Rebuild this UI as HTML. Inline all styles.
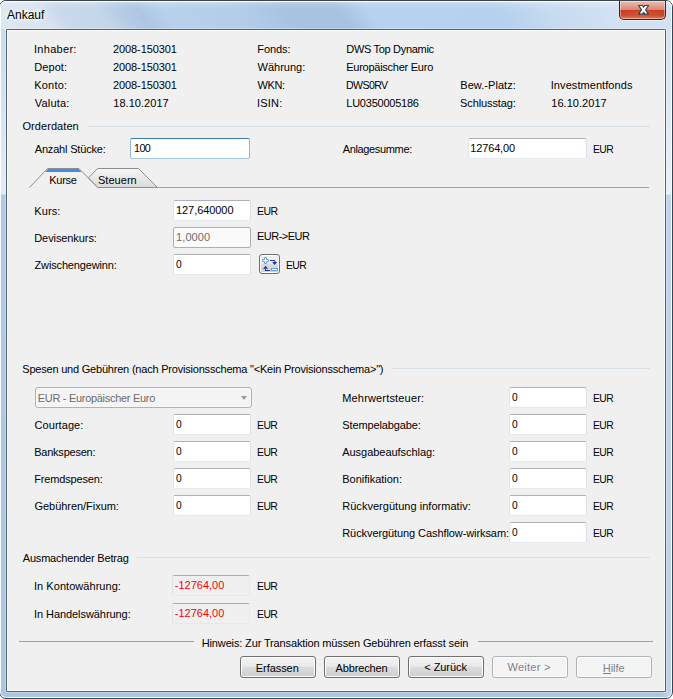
<!DOCTYPE html>
<html><head><meta charset="utf-8"><title>Ankauf</title>
<style>*{box-sizing:border-box;margin:0;padding:0}
html,body{width:673px;height:699px;overflow:hidden;background:#fff}
body{font-family:"Liberation Sans",sans-serif;font-size:11px;color:#000;position:relative}
.abs{position:absolute}
#frame{position:absolute;left:-1px;top:0;width:674px;height:699px;border:1px solid #3a444f;border-radius:7px;overflow:hidden;
 background:linear-gradient(90deg,rgba(255,255,255,0) 660px,rgba(255,255,255,.22) 668px),linear-gradient(180deg,#cbdcf0 0px,#c9dbef 30px,#d5e3f3 110px,#e3ecf7 193px,#aecae8 194px,#a9c6e3 699px)}
#frame:after{content:"";position:absolute;left:0;top:0;right:0;bottom:0;border-radius:6px;box-shadow:inset 0 0 0 1px rgba(255,255,255,.93)}
#tb{position:absolute;left:0;top:0;width:672px;height:28px;overflow:hidden}
#stripes{position:absolute;left:-40px;top:0;width:760px;height:28px;transform-origin:0 0;transform:skewX(36deg);
 background:linear-gradient(90deg,#dde7f2 30px,#d7e3f0 72px,#c9d9eb 92px,#c4d6e9 130px,#b7cde6 150px,#adc6e2 172px,#b8d1eb 196px,#b3cde9 270px,#a7c3e0 320px,#a7c3e0 372px,#b6d2ee 402px,#b5d1ed 530px,#c6daf0 580px,#d2e1f3 640px)}
#tbv{position:absolute;left:0;top:0;width:672px;height:28px;background:linear-gradient(180deg,rgba(255,255,255,.3) 1px,rgba(255,255,255,.1) 4px,rgba(255,255,255,0) 9px)}
#close{position:absolute;left:619px;top:1px;width:47px;height:19px;border:1px solid #4e1d17;border-top:none;border-radius:0 0 5px 5px;
 background:radial-gradient(ellipse 60% 45% at 50% 78%,rgba(240,110,70,.45),rgba(240,110,70,0) 100%),linear-gradient(180deg,#efbfb4 0%,#e3a195 25%,#d88a7b 47%,#c53a20 52%,#c4432a 80%,#db8460 100%);
 box-shadow:inset 0 0 0 1px rgba(255,255,255,.4),0 1px 1px rgba(255,255,255,.5)}
#client{position:absolute;left:6px;top:29px;width:660px;height:663px;border:1px solid #54626f;border-radius:1px;background:#f0f0f0;box-shadow:inset 0 0 0 1px #fbfbfb,0 0 0 1px rgba(255,255,255,.3)}
.t{position:absolute;white-space:nowrap;font-size:11px;line-height:13px;transform-origin:0 0}
.t.ttl{font-size:12px;line-height:14px;text-shadow:0 0 6px #fff,0 0 6px #fff,0 0 10px #fff}
.t.gr{color:#6d6d6d}
.t.dg{color:#838383}
.t.red{color:#f8000a}
.sep{position:absolute;background:#d5dfe5}
.hl{position:absolute;background:#a0a0a0}
.inp{position:absolute;background:#fff;border:1px solid #e3e9ef;border-top-color:#afb1b7;border-left-color:#e2e3ea;border-right-color:#dbdfe6;border-radius:2px}
.inp.focus{border-color:#3d7bad #8fb6d9 #a2c6e2 #8fb6d9}
.inp.dis{background:#fbfbfb;border:1px solid #afafaf;border-radius:2px}
.inp.ro{background:#f0f0f0;border-color:#abadb3 #e4e9f0 #e4e9f0 #dfe1e8}
.combo{position:absolute;border:1px solid #adb2b5;border-radius:3px;background:#f4f4f4;box-shadow:inset 0 0 0 1px #fafafa}
.combo .arr{position:absolute;right:4px;top:8px;width:0;height:0;border-left:3.5px solid transparent;border-right:3.5px solid transparent;border-top:4px solid #9a9a9a}
.ibtn,.btn{position:absolute;border:1px solid #707070;border-radius:3px;background:linear-gradient(180deg,#f2f2f2 0%,#ebebeb 47%,#dddddd 48%,#cfcfcf 100%);box-shadow:inset 0 0 0 1px #fcfcfc}
.btn.disb{border-color:#adb2b5;background:#f4f4f4;box-shadow:inset 0 0 0 1px #fcfcfc}
</style></head>
<body>
<div id="frame"><div id="tb"><div id="stripes"></div><div id="tbv"></div></div></div>
<div id="close"><svg width="45" height="18" viewBox="0 0 45 18" style="position:absolute;left:0;top:0"><path d="M18.6 4.5H22.6L23.6 6.3L24.6 4.5H28.6L25.7 8.8L28.6 13.1H24.6L23.6 11.3L22.6 13.1H18.6L21.5 8.8Z" fill="#fbfbfb" stroke="#39414d" stroke-width="1.2" stroke-linejoin="round"/></svg></div>
<div id="client"></div>
<span class="t " style="left:34.0px;top:43px;letter-spacing:0.292px;">Inhaber:</span>
<span class="t " style="left:34.25px;top:61px;letter-spacing:0.071px;">Depot:</span>
<span class="t " style="left:34.25px;top:79px;letter-spacing:0.191px;">Konto:</span>
<span class="t " style="left:34.75px;top:97px;letter-spacing:0.184px;">Valuta:</span>
<span class="t " style="left:113.0px;top:43px;letter-spacing:-0.093px;">2008-150301</span>
<span class="t " style="left:113.0px;top:61px;letter-spacing:-0.093px;">2008-150301</span>
<span class="t " style="left:113.0px;top:79px;letter-spacing:-0.093px;">2008-150301</span>
<span class="t " style="left:113.25px;top:97px;letter-spacing:0.048px;">18.10.2017</span>
<span class="t " style="left:257.25px;top:43px;letter-spacing:-0.056px;">Fonds:</span>
<span class="t " style="left:257.5px;top:61px;letter-spacing:0.01px;">Währung:</span>
<span class="t " style="left:257.5px;top:79px;letter-spacing:-0.409px;">WKN:</span>
<span class="t " style="left:257.0px;top:97px;letter-spacing:0.202px;">ISIN:</span>
<span class="t " style="left:346.25px;top:43px;letter-spacing:-0.307px;">DWS Top Dynamic</span>
<span class="t " style="left:346.25px;top:61px;letter-spacing:-0.256px;">Europäischer Euro</span>
<span class="t " style="left:346.25px;top:79px;letter-spacing:-0.6px;transform:scaleX(0.9603);">DWS0RV</span>
<span class="t " style="left:346.25px;top:97px;letter-spacing:-0.227px;">LU0350005186</span>
<span class="t " style="left:460.25px;top:79px;letter-spacing:0.049px;">Bew.-Platz:</span>
<span class="t " style="left:460.0px;top:97px;letter-spacing:-0.105px;">Schlusstag:</span>
<span class="t " style="left:550.75px;top:79px;letter-spacing:0.068px;">Investmentfonds</span>
<span class="t " style="left:551.25px;top:97px;letter-spacing:0.048px;">16.10.2017</span>
<span class="t " style="left:22.5px;top:120px;letter-spacing:0.064px;">Orderdaten</span>
<div class="sep" style="left:87px;top:126px;width:563px;height:1px;"></div>
<span class="t " style="left:34.75px;top:143px;letter-spacing:-0.179px;">Anzahl Stücke:</span>
<div class="inp focus" style="left:130px;top:138px;width:120px;height:21px;"></div>
<span class="t " style="left:133.5px;top:142px;letter-spacing:-0.6px;transform:scaleX(0.9807);">100</span>
<span class="t " style="left:342.75px;top:143px;letter-spacing:-0.357px;">Anlagesumme:</span>
<div class="inp" style="left:468px;top:138px;width:119px;height:21px;"></div>
<span class="t " style="left:470.25px;top:142px;letter-spacing:-0.143px;">12764,00</span>
<span class="t " style="left:593.0px;top:143px;letter-spacing:-0.6px;transform:scaleX(0.9376);">EUR</span>
<svg class="abs" style="left:20px;top:160px" width="640" height="32" viewBox="20 160 640 32">
<defs><linearGradient id="tg" x1="0" y1="0" x2="0" y2="1"><stop offset="0" stop-color="#f6f6f6"/><stop offset="1" stop-color="#dadada"/></linearGradient></defs>
<path d="M88.5 177.8 L97.5 168.5 L138.5 168.5 L157.5 187.5 L97.5 187.5 Z" fill="url(#tg)" stroke="#8e8e8e" stroke-width="1"/>
<path d="M157.5 187.5 L649 187.5" stroke="#a0a0a0" stroke-width="1" fill="none"/>
<path d="M29.5 187.5 L47.5 168.5 L79 168.5 L97.5 187.5" fill="#f0f0f0" stroke="#8e8e8e" stroke-width="1"/>
<path d="M48 169 L78.6 169 L81.5 172 L45.2 172 Z" fill="#3b8ef0"/>
</svg>
<span class="t " style="left:49.25px;top:174px;letter-spacing:-0.289px;">Kurse</span>
<span class="t " style="left:98.0px;top:174px;letter-spacing:0.026px;">Steuern</span>
<span class="t " style="left:34.25px;top:205px;letter-spacing:0.105px;">Kurs:</span>
<div class="inp" style="left:173px;top:200px;width:78px;height:21px;"></div>
<span class="t " style="left:176.0px;top:204px;letter-spacing:-0.067px;">127,640000</span>
<span class="t " style="left:257.0px;top:205px;letter-spacing:-0.6px;transform:scaleX(0.9571);">EUR</span>
<span class="t " style="left:34.25px;top:232px;letter-spacing:-0.089px;">Devisenkurs:</span>
<div class="inp dis" style="left:173px;top:227px;width:78px;height:21px;"></div>
<span class="t gr" style="left:176.0px;top:231px;letter-spacing:0.103px;">1,0000</span>
<span class="t " style="left:257.0px;top:230px;letter-spacing:-0.505px;">EUR-&gt;EUR</span>
<span class="t " style="left:34.5px;top:259px;letter-spacing:-0.144px;">Zwischengewinn:</span>
<div class="inp" style="left:173px;top:254px;width:78px;height:21px;"></div>
<span class="t " style="left:176.25px;top:258px;transform:scaleX(0.9295);">0</span>
<span class="t " style="left:285.75px;top:259px;letter-spacing:-0.6px;transform:scaleX(0.9425);">EUR</span>
<div class="ibtn" style="left:259px;top:254px;width:21px;height:20px"></div>
<svg class="abs" style="left:259px;top:254px" width="21" height="20" viewBox="259 254 21 20">
<path d="M264.5 257.5h2v2h2v2h-2v2h-2v-2h-2v-2h2z" fill="#fbfdff" stroke="#5c9bd9" stroke-width="0.9"/>
<path d="M270 260.5h4.3l1 1.4" fill="none" stroke="#1a3a9e" stroke-width="1.1"/>
<path d="M272.1 261.9h5.1l-2.55 3.1z" fill="#1a3a9e"/>
<path d="M269.8 270.5h-4.3v-2" fill="none" stroke="#1a3a9e" stroke-width="1.1"/>
<path d="M263 268.8h5.1l-2.55-3.1z" fill="#1a3a9e"/>
<rect x="271.5" y="268.5" width="6" height="2" fill="#fbfdff" stroke="#5c9bd9" stroke-width="0.9"/>
</svg>
<span class="t " style="left:22.25px;top:363px;letter-spacing:-0.206px;">Spesen und Gebühren (nach Provisionsschema &quot;&lt;Kein Provisionsschema&gt;&quot;)</span>
<div class="sep" style="left:392px;top:368px;width:258px;height:1px;"></div>
<div class="combo" style="left:35px;top:387px;width:217px;height:21px;"><i class="arr"></i></div>
<span class="t gr" style="left:37.75px;top:392px;letter-spacing:-0.3px;">EUR - Europäischer Euro</span>
<span class="t " style="left:34.5px;top:419px;letter-spacing:0.066px;">Courtage:</span>
<div class="inp" style="left:173px;top:414px;width:78px;height:21px;"></div>
<span class="t " style="left:176.25px;top:418px;transform:scaleX(0.9295);">0</span>
<span class="t " style="left:256.75px;top:419px;letter-spacing:-0.6px;transform:scaleX(0.9474);">EUR</span>
<span class="t " style="left:34.25px;top:446px;letter-spacing:-0.238px;">Bankspesen:</span>
<div class="inp" style="left:173px;top:441px;width:78px;height:21px;"></div>
<span class="t " style="left:176.25px;top:445px;transform:scaleX(0.9295);">0</span>
<span class="t " style="left:256.75px;top:446px;letter-spacing:-0.6px;transform:scaleX(0.9474);">EUR</span>
<span class="t " style="left:34.25px;top:473px;letter-spacing:-0.159px;">Fremdspesen:</span>
<div class="inp" style="left:173px;top:468px;width:78px;height:21px;"></div>
<span class="t " style="left:176.25px;top:472px;transform:scaleX(0.9295);">0</span>
<span class="t " style="left:256.75px;top:473px;letter-spacing:-0.6px;transform:scaleX(0.9474);">EUR</span>
<span class="t " style="left:34.5px;top:500px;letter-spacing:-0.041px;">Gebühren/Fixum:</span>
<div class="inp" style="left:173px;top:495px;width:78px;height:21px;"></div>
<span class="t " style="left:176.25px;top:499px;transform:scaleX(0.9295);">0</span>
<span class="t " style="left:256.75px;top:500px;letter-spacing:-0.6px;transform:scaleX(0.9474);">EUR</span>
<span class="t " style="left:342.25px;top:392px;letter-spacing:0.166px;">Mehrwertsteuer:</span>
<div class="inp" style="left:509px;top:387px;width:78px;height:21px;"></div>
<span class="t " style="left:511.75px;top:391px;transform:scaleX(0.9295);">0</span>
<span class="t " style="left:592.75px;top:392px;letter-spacing:-0.6px;transform:scaleX(0.9376);">EUR</span>
<span class="t " style="left:342.25px;top:419px;letter-spacing:-0.125px;">Stempelabgabe:</span>
<div class="inp" style="left:509px;top:414px;width:78px;height:21px;"></div>
<span class="t " style="left:511.75px;top:418px;transform:scaleX(0.9295);">0</span>
<span class="t " style="left:592.75px;top:419px;letter-spacing:-0.6px;transform:scaleX(0.9376);">EUR</span>
<span class="t " style="left:342.25px;top:446px;letter-spacing:-0.041px;">Ausgabeaufschlag:</span>
<div class="inp" style="left:509px;top:441px;width:78px;height:21px;"></div>
<span class="t " style="left:511.75px;top:445px;transform:scaleX(0.9295);">0</span>
<span class="t " style="left:592.75px;top:446px;letter-spacing:-0.6px;transform:scaleX(0.9376);">EUR</span>
<span class="t " style="left:342.25px;top:473px;letter-spacing:-0.012px;">Bonifikation:</span>
<div class="inp" style="left:509px;top:468px;width:78px;height:21px;"></div>
<span class="t " style="left:511.75px;top:472px;transform:scaleX(0.9295);">0</span>
<span class="t " style="left:592.75px;top:473px;letter-spacing:-0.6px;transform:scaleX(0.9376);">EUR</span>
<span class="t " style="left:342.25px;top:500px;letter-spacing:0.031px;">Rückvergütung informativ:</span>
<div class="inp" style="left:509px;top:495px;width:78px;height:21px;"></div>
<span class="t " style="left:511.75px;top:499px;transform:scaleX(0.9295);">0</span>
<span class="t " style="left:592.75px;top:500px;letter-spacing:-0.6px;transform:scaleX(0.9376);">EUR</span>
<span class="t " style="left:342.25px;top:527px;letter-spacing:-0.085px;">Rückvergütung Cashflow-wirksam:</span>
<div class="inp" style="left:509px;top:522px;width:78px;height:21px;"></div>
<span class="t " style="left:511.75px;top:526px;transform:scaleX(0.9295);">0</span>
<span class="t " style="left:592.75px;top:527px;letter-spacing:-0.6px;transform:scaleX(0.9376);">EUR</span>
<span class="t " style="left:22.75px;top:552px;letter-spacing:-0.187px;">Ausmachender Betrag</span>
<div class="sep" style="left:137px;top:557px;width:513px;height:1px;"></div>
<span class="t " style="left:34.0px;top:580px;letter-spacing:0.043px;">In Kontowährung:</span>
<div class="inp ro" style="left:172px;top:575px;width:78px;height:21px;"></div>
<span class="t red" style="left:174.75px;top:579px;letter-spacing:0.004px;">-12764,00</span>
<span class="t " style="left:257.0px;top:580px;letter-spacing:-0.6px;transform:scaleX(0.9474);">EUR</span>
<span class="t " style="left:34.0px;top:608px;letter-spacing:-0.068px;">In Handelswährung:</span>
<div class="inp ro" style="left:172px;top:603px;width:78px;height:21px;"></div>
<span class="t red" style="left:174.75px;top:607px;letter-spacing:0.004px;">-12764,00</span>
<span class="t " style="left:257.0px;top:608px;letter-spacing:-0.6px;transform:scaleX(0.9474);">EUR</span>
<div class="hl" style="left:19px;top:641px;width:175px;height:1px;"></div>
<div class="hl" style="left:478px;top:641px;width:175px;height:1px;"></div>
<span class="t " style="left:201.75px;top:637px;letter-spacing:-0.141px;">Hinweis: Zur Transaktion müssen Gebühren erfasst sein</span>
<div class="btn " style="left:240px;top:656px;width:76px;height:22px"></div>
<div class="btn " style="left:324px;top:656px;width:76px;height:22px"></div>
<div class="btn " style="left:408px;top:656px;width:76px;height:22px"></div>
<div class="btn disb" style="left:492px;top:656px;width:76px;height:22px"></div>
<div class="btn disb" style="left:576px;top:656px;width:76px;height:22px"></div>
<span class="t " style="left:255.75px;top:662px;letter-spacing:-0.05px;">Erfassen</span>
<span class="t " style="left:335.5px;top:662px;letter-spacing:-0.126px;">Abbrechen</span>
<span class="t " style="left:424.25px;top:661px;letter-spacing:-0.051px;">&lt; Zurück</span>
<span class="t dg" style="left:507.5px;top:661px;letter-spacing:0.263px;">Weiter &gt;</span>
<span class="t dg" style="left:602.75px;top:662px;letter-spacing:-0.056px;">Hilfe</span>
<div class="abs" style="left:603px;top:673px;width:8px;height:1px;background:#838383"></div>
<span class="t ttl" style="left:7.0px;top:8px;letter-spacing:0.002px;">Ankauf</span>
</body></html>
